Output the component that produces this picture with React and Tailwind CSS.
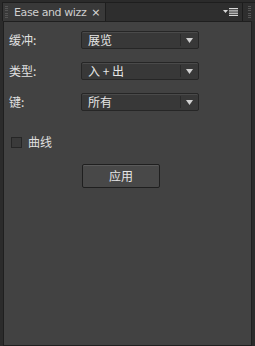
import React from "react";

const font = { fontFamily: '"Noto Sans CJK SC", "Liberation Sans", sans-serif' };

function Select({ value }) {
  return (
    <div className="flex h-[18px] w-[118px] items-center rounded-[2px] border border-[#262626] bg-[#383838] shadow-[inset_0_1px_0_#4a4a4a]">
      <span className="flex-1 pl-[6px] text-[12px] leading-none text-[#e6e6e6]">{value}</span>
      <div className="h-[12px] w-px bg-[#2a2a2a]" />
      <div className="flex w-[17px] items-center justify-center">
        <svg width="7" height="5" viewBox="0 0 7 5"><path d="M0 0H7L3.5 5Z" fill="#d0d0d0" /></svg>
      </div>
    </div>
  );
}

function Row({ label, value }) {
  return (
    <div className="flex items-center">
      <span className="w-[72px] text-[12px] text-[#e0e0e0]">{label}</span>
      <Select value={value} />
    </div>
  );
}

function Grip() {
  return (
    <div className="flex h-[12px] w-[3px] flex-col justify-between">
      {[0,1,2,3,4,5].map(i => <div key={i} className="h-px w-[3px] bg-[#555]" />)}
    </div>
  );
}

export default function App() {
  return (
    <div className="flex h-[346px] w-[255px] flex-col bg-[#2b2b2b]" style={font}>
      <div className="flex h-[21px] items-end">
        <div className="ml-[2px] flex h-[19px] shrink-0 items-center whitespace-nowrap border border-b-0 border-[#1e1e1e] bg-[#393939] pl-[2px] pr-[4px]">
          <Grip />
          <span className="ml-[6px] leading-none text-[#cfcfcf]" style={{fontFamily:'"DejaVu Sans", sans-serif', fontSize:'11px', letterSpacing:'-0.4px'}}>Ease and wizz</span>
          <span className="ml-[5px] text-[11px] leading-none text-[#dcdcdc]" style={{fontFamily:'"DejaVu Sans", sans-serif'}}>×</span>
        </div>
        <div className="flex h-[19px] flex-1 items-center justify-end border-t border-[#1e1e1e] bg-[#2e2e2e] pr-[4px]">
          <svg width="16" height="8" viewBox="0 0 16 8">
            <path d="M0 2H5L2.5 5Z" fill="#d8d8d8" />
            <rect x="6" y="0" width="9" height="1.2" fill="#d8d8d8" />
            <rect x="6" y="2.3" width="9" height="1.2" fill="#d8d8d8" />
            <rect x="6" y="4.6" width="9" height="1.2" fill="#d8d8d8" />
            <rect x="6" y="6.8" width="9" height="1.2" fill="#d8d8d8" />
          </svg>
          <div className="ml-[3px] h-[19px] w-px bg-[#1c1c1c]" />
          <div className="ml-[5px]"><Grip /></div>
        </div>
      </div>
      <div className="mx-[3px] flex-1 border border-[#1f1f1f] bg-[#424242] pl-[5px] pt-[9px]">
        <div className="flex flex-col gap-[13px]">
          <Row label="缓冲:" value="展览" />
          <Row label="类型:" value="入 + 出" />
          <Row label="键:" value="所有" />
        </div>
        <div className="mt-[22px] flex items-center">
          <div className="ml-[2px] h-[11px] w-[11px] border border-[#262626] bg-[#3a3a3a]" />
          <span className="ml-[6px] text-[12px] text-[#e0e0e0]">曲线</span>
        </div>
        <div className="ml-[73px] mt-[13px] flex h-[24px] w-[78px] items-center justify-center rounded-[2px] border border-[#1f1f1f] bg-[#484848] shadow-[inset_0_1px_0_#5a5a5a]">
          <span className="text-[12px] text-[#e6e6e6]">应用</span>
        </div>
      </div>
    </div>
  );
}
